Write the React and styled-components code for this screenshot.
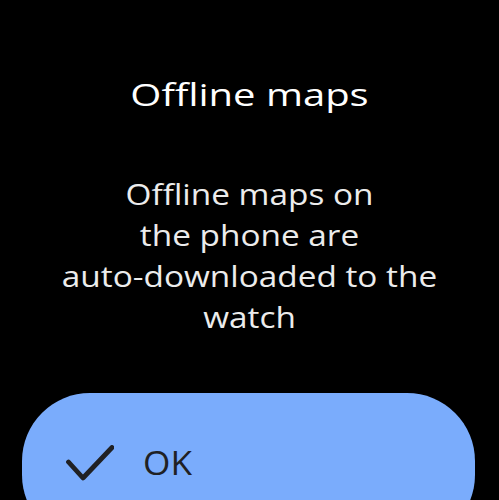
import React from "react";
import styled, { createGlobalStyle } from "styled-components";

const Global = createGlobalStyle`
  html, body {
    margin: 0;
    padding: 0;
    background: #000;
  }
  body {
    font-family: "Open Sans", Roboto, sans-serif;
    overflow: hidden;
  }
`;

const Screen = styled.div`
  width: 499px;
  height: 500px;
  background: #000;
  display: flex;
  flex-direction: column;
  overflow: hidden;
`;

/* Wear-style wide display type */
const Title = styled.h1`
  margin: 76px 0 0;
  font-size: 31px;
  font-weight: 500;
  line-height: 36px;
  color: #ffffff;
  text-align: center;
  transform: scaleX(1.29);
`;

const Message = styled.div`
  margin-top: 61px;
  display: flex;
  flex-direction: column;
`;

const Line = styled.span`
  display: block;
  font-size: 29px;
  font-weight: 400;
  line-height: 41px;
  color: #ececec;
  text-align: center;
  transform: scaleX(1.15);
`;

const Chip = styled.button`
  margin: 56px 24px 0 22px;
  flex-shrink: 0;
  height: 150px;
  border: none;
  border-radius: 68px;
  background: #7aacfc;
  display: flex;
  align-items: flex-start;
  gap: 29px;
  padding: 52px 0 0 44px;
  font-family: "Open Sans", Roboto, sans-serif;
  cursor: pointer;
`;

const ChipLabel = styled.span`
  font-size: 32px;
  font-weight: 400;
  line-height: 36px;
  color: #202124;
  transform: scaleX(1.1);
  transform-origin: left center;
`;

const CheckIcon = () => (
  <svg width="48" height="36" viewBox="0 0 48 36" fill="none">
    <path
      d="M2.5 17 L17 33 L46 2.5"
      stroke="#202124"
      strokeWidth="4.8"
      strokeLinecap="round"
      strokeLinejoin="round"
    />
  </svg>
);

const lines = ["Offline maps on", "the phone are", "auto-downloaded to the", "watch"];

export default function App() {
  return (
    <>
      <Global />
      <Screen>
        <Title>Offline maps</Title>
        <Message>
          {lines.map((l) => (
            <Line key={l}>{l}</Line>
          ))}
        </Message>
        <Chip>
          <CheckIcon />
          <ChipLabel>OK</ChipLabel>
        </Chip>
      </Screen>
    </>
  );
}
